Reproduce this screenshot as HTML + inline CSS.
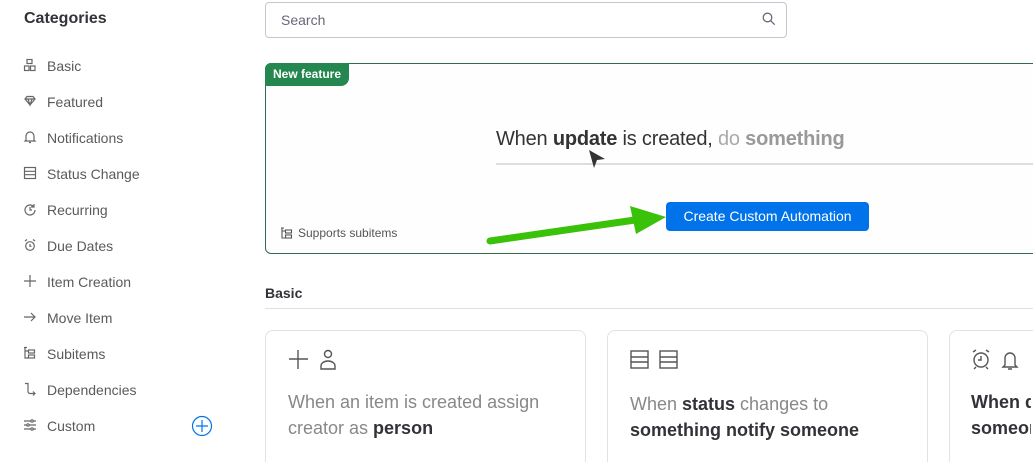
<!DOCTYPE html>
<html style="overflow:hidden;width:1033px;height:462px"><head><style>
body{margin:0;width:1033px;height:462px;overflow:hidden;background:#fff;font-family:"Liberation Sans",sans-serif;position:relative;color:#323338}
.a{position:absolute}
.cat{left:24px;top:10px;font-size:16px;font-weight:bold;color:#323338}
.it{left:24px;font-size:14px;color:#5a5a5a;height:20px;line-height:20px}
.it span{position:absolute;left:23px;white-space:nowrap}
.card{border:1px solid #e2e2e6;border-radius:8px;background:#fff}
.ct{font-size:18px;line-height:26px;color:#888;font-weight:300}
.ct b{color:#323338;font-weight:600}
</style></head><body>
<div class="a cat">Categories</div>
<svg class="a" style="left:0;top:0" width="250" height="462" fill="none" stroke="#666" stroke-width="1.2">
<g transform="translate(24,59)"><rect x="3" y="0.5" width="5" height="4"/><rect x="0.5" y="7" width="4.5" height="4.5"/><rect x="6.5" y="7" width="4.5" height="4.5"/></g>
<g transform="translate(24,96)"><path d="M1 3l2-2.5h6l2 2.5-5 6z M1 3h10 M4 3l2 6 2-6"/></g>
<g transform="translate(24,131)"><path d="M2 9V5a4 4 0 018 0v4l1 1H1z M5 11.5h2"/></g>
<g transform="translate(24,167)"><rect x="0.5" y="0.5" width="11" height="11"/><path d="M1 4.3h10 M1 7.7h10"/></g>
<g transform="translate(24,203)"><path d="M10 4A5 5 0 1 0 11 7 M10 1v3h-3 M6 4v3h2"/></g>
<g transform="translate(24,239)"><circle cx="6" cy="7" r="4.3"/><path d="M6 5v2.3h1.5 M1 2l2-1.5 M11 2l-2-1.5"/></g>
<g transform="translate(24,275)"><path d="M6 0v12 M0 6h12"/></g>
<g transform="translate(24,311)"><path d="M0 6h11 M7 2l4 4-4 4"/></g>
<g transform="translate(24,347)"><path d="M1 0v11h3 M1 4h3 M0 0.5h3"/><rect x="4.5" y="3" width="6" height="3"/><rect x="4.5" y="8" width="6" height="3"/></g>
<g transform="translate(24,383)"><path d="M1 0.5h3v8a2 2 0 002 2h5 M9 8.5l2 2-2 2"/></g>
<g transform="translate(24,419)"><path d="M0 2h12 M0 6h12 M0 10h12"/><circle cx="8" cy="2" r="1.2" fill="#fff"/><circle cx="4" cy="6" r="1.2" fill="#fff"/><circle cx="8" cy="10" r="1.2" fill="#fff"/></g>
<g stroke="#0073ea"><circle cx="202" cy="426" r="9.5"/><path d="M202 420v12 M196 426h12"/></g>
</svg>
<div class="a it" style="top:56px"><span>Basic</span></div>
<div class="a it" style="top:92px"><span>Featured</span></div>
<div class="a it" style="top:128px"><span>Notifications</span></div>
<div class="a it" style="top:164px"><span>Status Change</span></div>
<div class="a it" style="top:200px"><span>Recurring</span></div>
<div class="a it" style="top:236px"><span>Due Dates</span></div>
<div class="a it" style="top:272px"><span>Item Creation</span></div>
<div class="a it" style="top:308px"><span>Move Item</span></div>
<div class="a it" style="top:344px"><span>Subitems</span></div>
<div class="a it" style="top:380px"><span>Dependencies</span></div>
<div class="a it" style="top:416px"><span>Custom</span></div>

<div class="a" style="left:265px;top:2px;width:520px;height:34px;border:1px solid #c5c7d0;border-radius:4px"></div>
<div class="a" style="left:281px;top:12px;font-size:14px;color:#676879">Search</div>
<svg class="a" style="left:762px;top:12px" width="14" height="14" fill="none" stroke="#676879" stroke-width="1.3"><circle cx="5.5" cy="5.5" r="4.3"/><path d="M8.7 8.7l4 4"/></svg>

<div class="a" style="left:0;top:0;width:1033px;height:462px;overflow:hidden">
<div class="a" style="left:265px;top:63px;width:800px;height:189px;border:1px solid #2f6d4c;border-radius:6px;background:#fefefe"></div>
<div class="a" style="left:265px;top:63px;width:84px;height:23px;background:#258750;border-radius:6px 0 8px 0;color:#fff;font-size:12px;font-weight:bold;line-height:22px;text-align:center">New feature</div>
<div class="a" style="left:496px;top:128px;font-size:20px;color:#333;white-space:nowrap;letter-spacing:-0.2px">When <b>update</b> is created, <span style="color:#aaa">do</span> <b style="color:#999">something</b></div>
<div class="a" style="left:496px;top:163px;width:540px;height:2px;background:#ddd"></div>
<svg class="a" style="left:585px;top:148px" width="24" height="26"><path d="M4 2l16 9-8 1-3 8z" fill="#333"/></svg>
<div class="a" style="left:666px;top:202px;width:203px;height:29px;background:#0073ea;border-radius:4px;color:#fff;font-size:14px;line-height:29px;text-align:center">Create Custom Automation</div>
<svg class="a" style="left:480px;top:200px" width="190" height="50"><path d="M10 41L155 20" stroke="#3ac10a" stroke-width="7" stroke-linecap="round"/><path d="M150 6l36 11-30 17z" fill="#3ac10a"/></svg>
<svg class="a" style="left:281px;top:227px" width="13" height="13" fill="none" stroke="#555" stroke-width="1.1"><path d="M1 1v10h3 M1 4h3 M0 1h3"/><rect x="4.5" y="3" width="6" height="3"/><rect x="4.5" y="8" width="6" height="3"/></svg>
<div class="a" style="left:298px;top:226px;font-size:12px;color:#555">Supports subitems</div>

<div class="a" style="left:265px;top:285px;font-size:14px;font-weight:bold;color:#323338">Basic</div>
<div class="a" style="left:265px;top:308px;width:768px;height:1px;background:#e0e0e0"></div>

<div class="a card" style="left:265px;top:330px;width:319px;height:150px"></div>
<div class="a card" style="left:607px;top:330px;width:319px;height:150px"></div>
<div class="a card" style="left:949px;top:330px;width:200px;height:150px"></div>
<svg class="a" style="left:288px;top:349px" width="60" height="22" fill="none" stroke="#555" stroke-width="1.4"><path d="M10 1v19 M1 10h19"/><circle cx="40" cy="5" r="3.5"/><path d="M33 20v-3a7 5 0 0114 0v3z"/></svg>
<svg class="a" style="left:630px;top:350px" width="50" height="20" fill="none" stroke="#555" stroke-width="1.4"><rect x="1" y="1" width="17" height="17"/><path d="M1 7h17 M1 12h17"/><rect x="30" y="1" width="17" height="17"/><path d="M30 7h17 M30 12h17"/></svg>
<svg class="a" style="left:971px;top:349px" width="50" height="22" fill="none" stroke="#555" stroke-width="1.4"><circle cx="10" cy="11" r="7"/><path d="M10 7v4h-3 M2 3l3-2 M18 3l-3-2 M5 18l-2 2 M15 18l2 2"/><path d="M34 16v-7a5 5 0 0110 0v7l2 2H32z M37 20h4"/></svg>
<div class="a ct" style="left:288px;top:389px;width:280px">When an item is created assign creator as <b>person</b></div>
<div class="a ct" style="left:630px;top:391px;width:290px">When <b>status</b> changes to <b>something notify someone</b></div>
<div class="a ct" style="left:971px;top:389px;width:60px;overflow:hidden;color:#323338;font-weight:600;white-space:nowrap">When date arrives notify<br>someone</div>
</div>
</body></html>
